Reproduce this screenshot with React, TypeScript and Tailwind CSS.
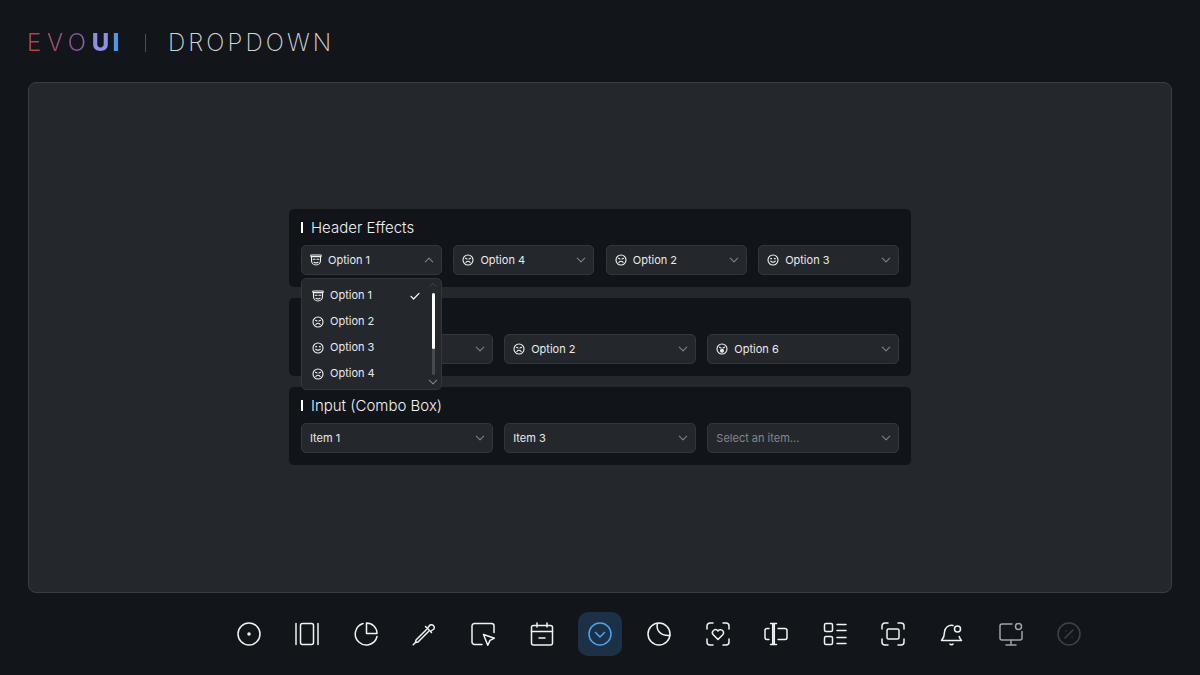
import React from "react";

const Svg = ({ size = 24, className = "", children }: { size?: number; className?: string; children: React.ReactNode }) => (
  <svg width={size} height={size} viewBox="0 0 24 24" fill="none" stroke="currentColor" strokeWidth={1.5} strokeLinecap="round" strokeLinejoin="round" className={className}>
    {children}
  </svg>
);

const Chevron = ({ up = false, className = "text-[#7f8287]" }: { up?: boolean; className?: string }) => (
  <svg width="12" height="12" viewBox="0 0 12 12" fill="none" stroke="currentColor" strokeWidth={1.1} strokeLinecap="round" strokeLinejoin="round" className={className}>
    <path d={up ? "M2.300 7.800L6 4.200l3.700 3.600" : "M2.300 4.200L6 7.800l3.700-3.600"} />
  </svg>
);

type FaceKind = "halo" | "sad" | "smile" | "frown" | "angry" | "wow";

const Face = ({ kind }: { kind: FaceKind }) => (
  <svg width="12" height="12" viewBox="0 0 12 12" fill="none" stroke="currentColor" strokeWidth={1.1} strokeLinecap="round" strokeLinejoin="round" className="shrink-0 text-[#f1f2f3]">
    {kind === "halo" ? (
      <>
        <path d="M1.500 1h9a.6.6 0 0 1 0 1.600h-9a.6.6 0 0 1 0-1.600z" />
        <path d="M1.500 3v3.500a4.500 4.500 0 0 0 9 0V3" />
        <path d="M3.200 5.200h1.900M6.900 5.200h1.900M4 8.200c1.200.8 2.800.8 4 0" />
      </>
    ) : (
      <>
        <circle cx="6" cy="6" r="5" />
        {kind === "wow" ? (
          <>
            <circle cx="6" cy="7.700" r="1.400" fill="currentColor" />
            <path d="M3.500 4.200l1.500.8M8.500 4.200L7 5" />
          </>
        ) : (
          <>
            {kind === "angry" || kind === "frown" ? <path d="M3.500 4.300l1.500.7M8.500 4.300L7 5" /> : <path d="M3.800 4.700h.7M7.500 4.700h.7" strokeWidth={1.3} />}
            {kind === "smile" && <path d="M3.700 7.100c1.200 1.400 3.400 1.400 4.600 0" />}
            {(kind === "frown" || kind === "angry") && <path d="M3.900 8.300c1.200-1.200 3-1.200 4.200 0" />}
            {kind === "sad" && <path d="M4 8.100c1.300-.7 2.700-.7 4 0" />}
          </>
        )}
      </>
    )}
  </svg>
);

const Select = ({ icon, label, placeholder, up }: { icon?: FaceKind; label: string; placeholder?: boolean; up?: boolean }) => (
  <div className="flex h-[30px] w-full items-center rounded-[5px] border border-[#33363c] bg-[#24272c] pl-[8px] pr-[6px]">
    {icon && (
      <span className="mr-[6px] flex w-[12px] justify-center">
        <Face kind={icon} />
      </span>
    )}
    <span className={`mt-[2px] flex-1 text-[11px] leading-none ${placeholder ? "text-[#85888d]" : "text-[#e9eaeb]"}`}>{label}</span>
    <Chevron up={up} />
  </div>
);

const Card = ({ title, children }: { title: string; children: React.ReactNode }) => (
  <section className="rounded-[5px] bg-[#11151a] px-3 pb-3 pt-[7px]">
    <div className="mb-[5px] flex h-6 items-center gap-2">
      <span className="h-[11px] w-[2px] bg-white" />
      <h2 className="text-[15px] font-light leading-6 text-[#f1f2f3]">{title}</h2>
    </div>
    {children}
  </section>
);

const Menu = () => {
  const items: [FaceKind, string][] = [
    ["halo", "Option 1"],
    ["angry", "Option 2"],
    ["smile", "Option 3"],
    ["frown", "Option 4"],
  ];
  return (
    <div className="absolute left-0 top-[33px] z-10 h-[112px] w-[141px] rounded-[5px] border border-[#33363c] bg-[#24272c]">
      <div className="flex flex-col pt-[4px]">
        {items.map(([k, t], i) => (
          <div key={t} className="flex h-[26px] items-center pl-[10px]">
            <span className="mr-[6px] flex w-[12px] justify-center">
              <Face kind={k} />
            </span>
            <span className="text-[11px] leading-none text-[#e9eaeb]">{t}</span>
            {i === 0 && (
              <svg width="12" height="12" viewBox="0 0 12 12" fill="none" stroke="currentColor" strokeWidth={1.2} strokeLinecap="round" strokeLinejoin="round" className="ml-[37px] text-white">
                <path d="M2 6.400l2.600 2.600L10 3.400" />
              </svg>
            )}
          </div>
        ))}
      </div>
      <div className="absolute right-[1px] top-[1px] flex h-[108px] w-[14px] flex-col items-center">
        <Chevron up className="h-[10px] text-[#44474c]" />
        <div className="mt-[3px] h-[82px] w-[3px] rounded-full bg-[#46494d]">
          <div className="h-[56px] w-[3px] rounded-full bg-white" />
        </div>
        <Chevron className="mt-[1px] text-[#7f8287]" />
      </div>
    </div>
  );
};

const corners = "M1 7V4a3 3 0 0 1 3-3h3M17 1h3a3 3 0 0 1 3 3v3M23 17v3a3 3 0 0 1-3 3h-3M7 23H4a3 3 0 0 1-3-3v-3";

const nav: { key: string; node: React.ReactNode; cls?: string }[] = [
  { key: "radio", node: <><circle cx="12" cy="12" r="11" /><circle cx="12" cy="12" r="1" fill="currentColor" /></> },
  { key: "carousel", node: <><rect x="5.500" y="1.500" width="13" height="21" rx="2" /><path d="M1 1.500v21M23 1.500v21" /></> },
  { key: "pie", node: <><path d="M9 1.500A11 11 0 1 0 23 14.500" /><path d="M12.500 1a10.500 10.500 0 0 1 10.500 10.500H12.500z" /></> },
  { key: "pipette", node: <><path d="M16 5.500l2-2.500a3 3 0 0 1 4 4l-3 2" /><path d="M13.500 4.500l6 6" /><path d="M14.500 7.500L4 18l-.5 2.500-2.300 2.300M16.500 9.500L6 20l-2.500.5" /></> },
  { key: "cursor", node: <><path d="M11 22.500H3.500A2.500 2.500 0 0 1 1 20V4a2.500 2.500 0 0 1 2.500-2.500h17A2.500 2.500 0 0 1 23 4v6.500" /><path d="M12.500 12.500l11 3.700-4.500 2.200-2.200 4.800z" /></> },
  { key: "cal", node: <><rect x="1.500" y="3.500" width="21" height="19.500" rx="2" /><path d="M1.500 9.500h21M7 1v4M17 1v4M9 16h6" /></> },
  { key: "active", node: <><circle cx="12" cy="12" r="11" /><path d="M7.500 10.500l4.500 4.500 4.500-4.500" /></>, cls: "text-[#4da3ee]" },
  { key: "moon", node: <><circle cx="12" cy="12" r="11" /><path d="M10.500 1.500C9 7 12 14 23 13.500" /></> },
  { key: "heart", node: <><path d={corners} /><path d="M12 17.500l-5-5a3 3 0 0 1 5-3.500 3 3 0 0 1 5 3.500z" /></> },
  { key: "textinput", node: <><path d="M5 6.500H3a2 2 0 0 0-2 2v7a2 2 0 0 0 2 2h2M14 6.500h7a2 2 0 0 1 2 2v7a2 2 0 0 1-2 2h-7" /><path d="M6.500 1.500h6M6.500 22.500h6M8.700 1.500v21M10.300 1.500v21" /></> },
  { key: "list", node: <><rect x="1.500" y="1.500" width="8" height="8" rx="1.500" /><rect x="1.500" y="14.500" width="8" height="8" rx="1.500" /><path d="M14 2.500h9M14 8.500h9M14 15.500h9M14 21.500h9" /></> },
  { key: "focus", node: <><path d={corners} /><rect x="6" y="7" width="12" height="10" rx="1.500" /></> },
  { key: "bell", node: <><path d="M13 3.500A7 7 0 0 0 4.500 10c0 5-1.500 6.500-3 8.500h20c-1-1.300-1.800-2.300-2.300-4" /><path d="M10 22c.6.900 2.400.900 3 0" /><circle cx="17.500" cy="7" r="3" /></> },
  { key: "monitor", node: <><path d="M13 2H3a2 2 0 0 0-2 2v12a2 2 0 0 0 2 2h18a2 2 0 0 0 2-2V9.500" /><path d="M12 18v5M7 23h10" /><circle cx="19.500" cy="4.500" r="3" /></>, cls: "text-[#a0a3a6]" },
  { key: "percent", node: <><circle cx="12" cy="12" r="11" /><path d="M8 16l8-8M9 9v0M15 15v0" /></>, cls: "text-[#3f4246]" },
];

export default function App() {
  return (
    <div className="flex h-[675px] w-[1200px] flex-col overflow-hidden bg-[#12161b] font-['Inter',sans-serif]">
      <header className="flex h-[82px] shrink-0 items-center pl-[27px] pt-[3px]">
        <span className="bg-[linear-gradient(90deg,#bb3d48_0%,#80589c_55%,#8f90e8_72%,#8a90e8_86%,#3f9bf0_93%)] bg-clip-text text-[24px] font-light leading-none tracking-[5.600px] text-transparent">
          EVO<span className="font-extrabold tracking-[3.500px]">UI</span>
        </span>
        <span className="ml-[22px] h-[18px] w-px bg-[#4c4f53]" />
        <span className="ml-[22px] text-[24px] font-extralight leading-none tracking-[3.100px] text-[#d4d5d6]">DROPDOWN</span>
      </header>

      <main className="mx-[28px] flex h-[511px] shrink-0 items-center justify-center rounded-lg border border-[#3a3d42] bg-[#24272c] pb-[2px]">
        <div className="flex w-[622px] flex-col gap-[11px]">
          <Card title="Header Effects">
            <div className="grid grid-cols-4 gap-[11.5px]">
              <div className="relative">
                <Select icon="halo" label="Option 1" up />
                <Menu />
              </div>
              <Select icon="frown" label="Option 4" />
              <Select icon="angry" label="Option 2" />
              <Select icon="smile" label="Option 3" />
            </div>
          </Card>
          <Card title="Icons">
            <div className="grid grid-cols-3 gap-[11.5px]">
              <Select icon="sad" label="Option 1" />
              <Select icon="angry" label="Option 2" />
              <Select icon="wow" label="Option 6" />
            </div>
          </Card>
          <Card title="Input (Combo Box)">
            <div className="grid grid-cols-3 gap-[11.5px]">
              <Select label="Item 1" />
              <Select label="Item 3" />
              <Select label="Select an item..." placeholder />
            </div>
          </Card>
        </div>
      </main>

      <nav className="mt-[19px] flex gap-[14.64px] pl-[226.500px]">
        {nav.map((n) => (
          <button key={n.key} className={`flex h-[44px] w-[44px] shrink-0 items-center justify-center rounded-[10px] ${n.key === "active" ? "bg-[#1c3046]" : ""} ${n.cls ?? "text-[#f1f2f3]"}`}>
            <Svg>{n.node}</Svg>
          </button>
        ))}
      </nav>
    </div>
  );
}
